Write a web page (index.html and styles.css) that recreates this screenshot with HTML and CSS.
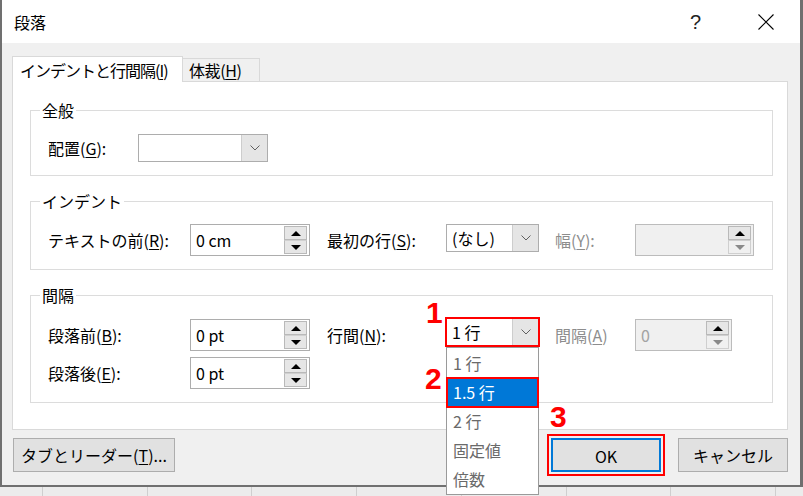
FILE: index.html
```html
<!DOCTYPE html>
<html lang="ja">
<head>
<meta charset="utf-8">
<title>段落</title>
<link rel="stylesheet" href="styles.css">
</head>
<body>
<div class="screen">
  <div class="dialog">
    <div class="titlebar">
      <span class="title">段落</span>
      <span class="cap help">?</span>
      <span class="cap close"><svg width="16" height="16" viewBox="0 0 16 16"><path d="M0.5 0.5 L15.5 15.5 M15.5 0.5 L0.5 15.5" stroke="#000" stroke-width="1.1" fill="none"/></svg></span>
    </div>
    <div class="body">
      <div class="tabs">
        <div class="tab active">インデントと行間隔(<u>I</u>)</div>
        <div class="tab second">体裁(<u>H</u>)</div>
      </div>
      <div class="panel">
        <fieldset class="group g-general">
          <legend>全般</legend>
          <div class="row">
            <span class="lbl l-align">配置(<u>G</u>):</span>
            <div class="combo c-align"><span class="val"></span><span class="drop"><svg width="10" height="6" viewBox="0 0 10 6"><path d="M0.5 0.5 L5 5 L9.5 0.5" stroke="#606060" fill="none"/></svg></span></div>
          </div>
        </fieldset>

        <fieldset class="group g-indent">
          <legend>インデント</legend>
          <div class="row">
            <span class="lbl c1">テキストの前(<u>R</u>):</span>
            <div class="spin c2"><span class="val">0 cm</span><span class="arrows"><span class="ab"><i class="up"></i></span><span class="ab"><i class="down"></i></span></span></div>
            <span class="lbl c3">最初の行(<u>S</u>):</span>
            <div class="combo c4"><span class="val">(なし)</span><span class="drop"><svg width="10" height="6" viewBox="0 0 10 6"><path d="M0.5 0.5 L5 5 L9.5 0.5" stroke="#606060" fill="none"/></svg></span></div>
            <span class="lbl c5 dis">幅(<u>Y</u>):</span>
            <div class="spin c6 disabled"><span class="val"></span><span class="arrows"><span class="ab"><i class="up"></i></span><span class="ab"><i class="down"></i></span></span></div>
          </div>
        </fieldset>

        <fieldset class="group g-space">
          <legend>間隔</legend>
          <div class="rows">
            <div class="row">
              <span class="lbl c1">段落前(<u>B</u>):</span>
              <div class="spin c2"><span class="val">0 pt</span><span class="arrows"><span class="ab"><i class="up"></i></span><span class="ab"><i class="down"></i></span></span></div>
              <span class="lbl c3">行間(<u>N</u>):</span>
              <div class="combo c4 open marked"><span class="val">1 行</span><span class="drop"><svg width="10" height="6" viewBox="0 0 10 6"><path d="M0.5 0.5 L5 5 L9.5 0.5" stroke="#606060" fill="none"/></svg></span>
                <span class="mark m1">1</span>
                <ul class="list">
                  <li>1 行</li>
                  <li class="sel">1.5 行<span class="mark m2">2</span></li>
                  <li>2 行</li>
                  <li>固定値</li>
                  <li>倍数</li>
                </ul>
              </div>
              <span class="lbl c5 dis">間隔(<u>A</u>)</span>
              <div class="spin c6s disabled"><span class="val">0</span><span class="arrows"><span class="ab"><i class="up"></i></span><span class="ab"><i class="down"></i></span></span></div>
            </div>
            <div class="row">
              <span class="lbl c1">段落後(<u>E</u>):</span>
              <div class="spin c2"><span class="val">0 pt</span><span class="arrows"><span class="ab"><i class="up"></i></span><span class="ab"><i class="down"></i></span></span></div>
            </div>
          </div>
        </fieldset>
      </div>
      <div class="footer">
        <button class="btn b-tabs">タブとリーダー(<u>T</u>)...</button>
        <div class="ok-wrap"><span class="mark m3">3</span><button class="btn b-ok">OK</button></div>
        <button class="btn b-cancel">キャンセル</button>
      </div>
    </div>
  </div>
  <div class="edge"></div>
</div>
<div class="sheet"></div>
</body>
</html>
```
FILE: styles.css
```css
* { box-sizing: border-box; }
html, body { margin: 0; padding: 0; }
body {
  width: 803px;
  height: 496px;
  overflow: hidden;
  background: #efefef;
  font-family: "Noto Sans CJK JP", "Noto Sans", sans-serif;
  font-size: 16px;
  color: #000;
}
u { text-decoration: underline; text-underline-offset: 2px; text-decoration-thickness: 1px; }

.screen { display: flex; height: 487px; position: relative; }
.dialog {
  width: 800px;
  height: 487px;
  border-left: 2px solid #707070;
  border-bottom: 2px solid #707070;
  background: #f0f0f0;
  display: flex;
  flex-direction: column;
  position: relative;
}
.edge { width: 3px; background: #6f6f6f; }
.sheet {
  height: 9px;
  background-color: #ececec;
  background-image: repeating-linear-gradient(to right, transparent 0 42px, #cfcfcf 42px 43px, transparent 43px 104.7px);
}

/* title bar */
.titlebar {
  height: 43px;
  background: #fff;
  display: flex;
  align-items: center;
  padding-left: 12px;
  flex: none;
}
.title { line-height: 20px; }
.cap { width: 69px; display: flex; justify-content: center; align-items: center; }
.help { margin-left: auto; font-family: "Liberation Sans", Arial, sans-serif; font-size: 20px; color: #222; line-height: 20px; padding-right: 2px; }
.close svg { display: block; }

/* body */
.body { flex: 1; padding: 13px 12px 0 10px; display: flex; flex-direction: column; }
.tabs { display: flex; align-items: flex-end; height: 25px; }
.tab {
  height: 23px;
  border: 1px solid #d9d9d9;
  border-bottom: none;
  background: #f0f0f0;
  padding: 0 6px;
  line-height: 22px;
  white-space: nowrap;
  letter-spacing: -0.4px;
}
.tab.second { width: 78px; margin-left: -1px; }
.tab.active {
  height: 26px;
  background: #fff;
  margin-bottom: -1px;
  position: relative;
  z-index: 1;
  width: 171px;
  padding-left: 7px;
  line-height: 26px;
  letter-spacing: -1px;
}
.panel {
  height: 349px;
  border: 1px solid #d9d9d9;
  background: #fff;
  display: flex;
  flex-direction: column;
  position: relative;
}

/* group boxes */
.group {
  margin: 0 14px 0 17px;
  border: 1px solid #dcdcdc;
  padding: 0 0 13px 17px;
  min-width: 0;
}
.group legend {
  line-height: 20px;
  height: 20px;
  padding: 0 2px;
  margin-left: -8px;
}
.g-general { margin-top: 18px; }
.g-indent { margin-top: 15px; }
.g-space { margin-top: 15px; }
.g-general .row { margin-top: 14px; }
.g-indent .row { margin-top: 13px; align-items: flex-start; }
.g-space .rows { margin-top: 14px; display: flex; flex-direction: column; gap: 6px; }

.row { display: flex; align-items: center; }
.g-indent .lbl, .g-space .lbl { line-height: 32px; }
.lbl { white-space: nowrap; }
.dis { color: #8d8d8d; }
.l-align { width: 90px; }
.c1 { width: 142px; }
.c2 { width: 120px; }
.c3 { width: 119px; margin-left: 17px; }
.c4 { width: 93px; }
.c5 { width: 80px; margin-left: 16px; }
.c6 { width: 119px; }
.c6s { width: 97px; }
.c-align { width: 130px; }

/* combo */
.combo {
  height: 28px;
  border: 1px solid #adadad;
  background: #fff;
  display: flex;
  position: relative;
}
.combo .val { flex: 1; padding-left: 5px; line-height: 26px; white-space: nowrap; }
.combo .drop {
  width: 26px;
  background: #e5e5e5;
  border-left: 1px solid #cdcdcd;
  display: flex;
  align-items: center;
  justify-content: center;
}
.combo .drop svg { display: block; }
.g-space .combo { margin-top: -1px; align-self: flex-start; }

/* spin */
.spin {
  height: 32px;
  border: 1px solid #adadad;
  background: #fff;
  display: flex;
}
.spin .val { flex: 1; padding-left: 5px; line-height: 30px; }
.spin .arrows {
  width: 23px;
  margin: 1px 2px 1px 0;
  display: flex;
  flex-direction: column;
}
.ab {
  flex: 1;
  border: 1px solid #b9b9b9;
  background: #e6e6e6;
  display: flex;
  align-items: center;
  justify-content: center;
}
.ab + .ab { border-top: 1px solid #d0d0d0; }
.up, .down { width: 0; height: 0; border-left: 5px solid transparent; border-right: 5px solid transparent; }
.up { border-bottom: 5px solid #000; }
.down { border-top: 5px solid #000; }
.spin.disabled { background: #f0f0f0; border-color: #bcbcbc; }
.spin.disabled .val { color: #a3a3a3; }
.spin.disabled .ab { background: #f0f0f0; border-color: #cfcfcf; }
.spin.disabled .ab:first-child { background: #e6e6e6; border-color: #b9b9b9; }
.spin.disabled .down { border-top-color: #8a8a8a; }

/* dropdown list */
.list {
  position: absolute;
  left: -1px;
  top: 28px;
  width: 93px;
  margin: 0;
  padding: 1px 0 0 0;
  list-style: none;
  background: #fff;
  border: 1px solid #9a9a9a;
  z-index: 5;
}
.list li {
  height: 29px;
  line-height: 29px;
  padding-left: 6px;
  color: #6a6a6a;
  position: relative;
}
.list li.sel { background: #0078d7; color: #fff; }
.list li.sel::after, .combo.marked::after {
  content: "";
  position: absolute;
  inset: -1px;
  border: 2px solid #ff0000;
}
.combo.marked::after { inset: -2px; }

/* annotation numbers */
.mark {
  position: absolute;
  font-family: "Liberation Sans", Arial, sans-serif;
  font-weight: bold;
  font-size: 30px;
  line-height: 30px;
  color: #ff0000;
  z-index: 6;
}
.m1 { left: -21px; top: -21px; }
.m2 { left: -22px; top: -14px; }
.m3 { left: -1px; top: -36px; }

/* footer */
.footer { display: flex; align-items: flex-start; padding-top: 8px; }
.btn {
  font: inherit;
  color: #000;
  height: 34px;
  border: 1px solid #adadad;
  background: #e1e1e1;
  padding: 0;
  line-height: 32px;
}
.b-tabs { width: 162px; margin-left: 1px; }
.ok-wrap { margin-left: auto; position: relative; }
.ok-wrap::after {
  content: "";
  position: absolute;
  inset: -4px;
  border: 2px solid #ff0000;
}
.b-ok { width: 110px; border: 2px solid #0078d7; display: block; }
.b-cancel { width: 110px; margin-left: 17px; }
```
